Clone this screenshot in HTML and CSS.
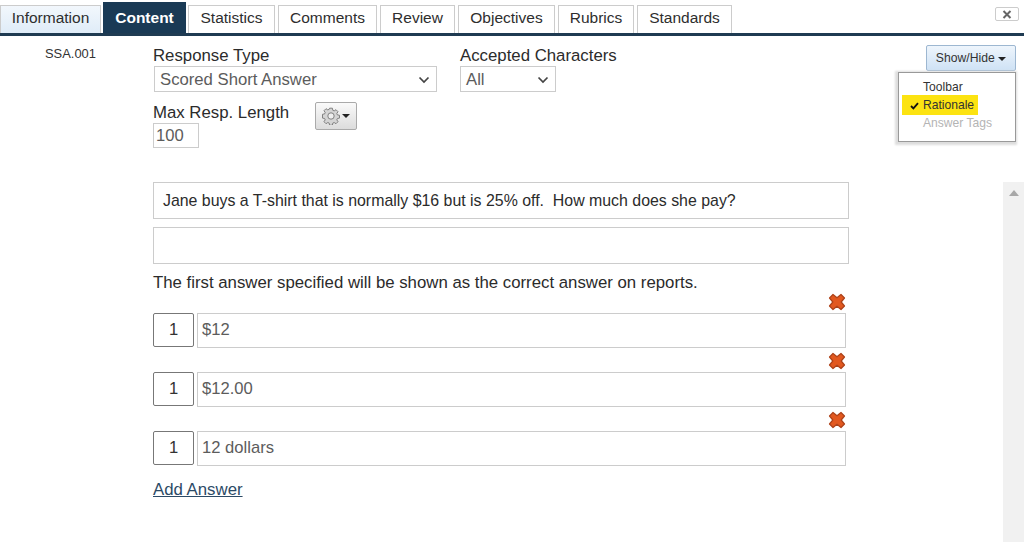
FILE: index.html
```html
<!DOCTYPE html>
<html lang="en">
<head>
<meta charset="utf-8">
<title>Content</title>
<link rel="stylesheet" href="styles.css">
</head>
<body>
<header class="tabs">
  <a class="tab tab-info">Information</a>
  <a class="tab tab-active">Content</a>
  <a class="tab tab-stat">Statistics</a>
  <a class="tab tab-comm">Comments</a>
  <a class="tab tab-rev">Review</a>
  <a class="tab tab-obj">Objectives</a>
  <a class="tab tab-rub">Rubrics</a>
  <a class="tab tab-std">Standards</a>
  <button class="close" aria-label="Close">
    <svg width="10" height="9" viewBox="0 0 10 9"><path d="M1.5 1 L8.500 8 M8.500 1 L1.500 8" stroke="#666" stroke-width="2" fill="none"/></svg>
  </button>
</header>

<section class="top">
  <div class="item-id">SSA.001</div>
  <div class="fields">
    <div class="field-row">
      <div class="field field-type">
        <label class="label">Response Type</label>
        <div class="select select-type">Scored Short Answer<svg class="chev" width="12" height="8" viewBox="0 0 12 8"><path d="M1.500 1.500 L6 6 L10.500 1.500" stroke="#444" stroke-width="1.700" fill="none"/></svg></div>
      </div>
      <div class="field">
        <label class="label">Accepted Characters</label>
        <div class="select select-chars">All<svg class="chev" width="12" height="8" viewBox="0 0 12 8"><path d="M1.500 1.500 L6 6 L10.500 1.500" stroke="#444" stroke-width="1.700" fill="none"/></svg></div>
      </div>
    </div>
    <div class="field-row field-row-2">
      <div class="field field-len">
        <label class="label">Max Resp. Length</label>
        <div class="input-len">100</div>
      </div>
      <button class="gear-btn" aria-label="Settings">
        <svg width="18" height="18" viewBox="0 0 18 18"><path d="M7.600 1.200h2.800l.4 2.100 1.400.6 1.800-1.200 2 2-1.200 1.800.6 1.400 2.100.4v2.800l-2.100.4-.6 1.400 1.200 1.800-2 2-1.800-1.200-1.400.6-.4 2.100H7.600l-.4-2.100-1.400-.6-1.800 1.200-2-2 1.200-1.800-.6-1.400-2.100-.4V7.300l2.100-.4.6-1.400-1.200-1.800 2-2 1.800 1.200 1.400-.6z" fill="#d4d4d4" stroke="#808080" stroke-width="1"/><circle cx="9" cy="9" r="3.200" fill="#eee" stroke="#808080" stroke-width="1"/></svg>
        <span class="caret"></span>
      </button>
    </div>
  </div>
  <div class="showhide">
    <button class="showhide-btn">Show/Hide <span class="caret caret-sm"></span></button>
    <div class="menu">
      <div class="menu-item">Toolbar</div>
      <div class="menu-item menu-on"><svg class="check" width="9" height="8" viewBox="0 0 9 8"><path d="M1 4 L3.400 6.400 L8 1.200" stroke="#111" stroke-width="1.800" fill="none"/></svg>Rationale</div>
      <div class="menu-item menu-off">Answer Tags</div>
    </div>
  </div>
</section>

<section class="lower">
  <div class="question">
    <div class="box">Jane buys a T-shirt that is normally $16 but is 25% off.&nbsp; How much does she pay?</div>
    <div class="box box-empty"></div>
    <p class="note">The first answer specified will be shown as the correct answer on reports.</p>
    <div class="answer">
      <svg class="del" width="18" height="18" viewBox="0 0 18 18"><path d="M5 1.500 9 4.800 13 1.500 16.500 5 13.200 9 16.500 13 13 16.500 9 13.200 5 16.500 1.500 13 4.800 9 1.500 5z" fill="#e2581f" stroke="#ad4219" stroke-width="1.200" stroke-linejoin="round"/></svg>
      <div class="answer-row"><div class="points">1</div><div class="answer-text">$12</div></div>
    </div>
    <div class="answer">
      <svg class="del" width="18" height="18" viewBox="0 0 18 18"><path d="M5 1.500 9 4.800 13 1.500 16.500 5 13.200 9 16.500 13 13 16.500 9 13.200 5 16.500 1.500 13 4.800 9 1.500 5z" fill="#e2581f" stroke="#ad4219" stroke-width="1.200" stroke-linejoin="round"/></svg>
      <div class="answer-row"><div class="points">1</div><div class="answer-text">$12.00</div></div>
    </div>
    <div class="answer">
      <svg class="del" width="18" height="18" viewBox="0 0 18 18"><path d="M5 1.500 9 4.800 13 1.500 16.500 5 13.200 9 16.500 13 13 16.500 9 13.200 5 16.500 1.500 13 4.800 9 1.500 5z" fill="#e2581f" stroke="#ad4219" stroke-width="1.200" stroke-linejoin="round"/></svg>
      <div class="answer-row"><div class="points">1</div><div class="answer-text">12 dollars</div></div>
    </div>
    <a class="add">Add Answer</a>
  </div>
  <div class="track"><span class="track-up"></span></div>
</section>
</body>
</html>
```

FILE: styles.css
```css
* { box-sizing: border-box; }
html, body { margin: 0; height: 542px; overflow: hidden; background: #fff; }
body { font-family: "Liberation Sans", Arial, sans-serif; color: #2b2b2b; font-size: 16px; display: flex; flex-direction: column; }

.tabs { display: flex; align-items: flex-end; height: 36px; border-bottom: 3px solid #1f3b52; flex: none; position: relative; }
.tab { height: 28px; padding-bottom: 3px; border: 1px solid #ccc; border-bottom: 0; background: #fff; display: flex; align-items: center; justify-content: center; font-size: 15.5px; color: #2e2e2e; margin-right: 3px; white-space: nowrap; }
.tab-info { width: 101px; margin-right: 2px; background: linear-gradient(#f2f7fc, #dfecf8); }
.tab-active { width: 83px; height: 31px; padding-bottom: 1px; margin-right: 2px; background: #1a3a55; border-color: #1a3a55; color: #fff; font-weight: bold; }
.tab-stat { width: 87px; }
.tab-comm { width: 99px; }
.tab-rev { width: 75px; }
.tab-obj { width: 97px; }
.tab-rub { width: 76px; }
.tab-std { width: 95px; }
.close { margin-left: auto; margin-right: 5px; margin-bottom: 12px; width: 24px; height: 14px; padding: 0; background: #fff; border: 1px solid #ccc; border-radius: 2px; display: flex; align-items: center; justify-content: center; }

.top { display: flex; height: 146px; flex: none; }
.item-id { width: 153px; padding: 10px 0 0 45px; font-size: 12.9px; color: #333; flex: none; }
.fields { padding-top: 10px; }
.field-row { display: flex; gap: 23px; }
.field-row-2 { margin-top: 12px; gap: 24px; }
.label { display: block; font-size: 16.8px; line-height: 19px; color: #2b2b2b; white-space: nowrap; }
.select { height: 26px; margin-top: 1px; border: 1px solid #ccc; background: #fff; color: #5c5c5c; font-size: 16.7px; padding: 1px 6px 0 5px; display: flex; align-items: center; justify-content: space-between; }
.select-type { width: 283px; margin-left: 1px; }
.select-chars { width: 96px; }
.chev { flex: none; }
.field-type { width: 284px; }
.field-len { width: 138px; }
.field-len .label { line-height: 18px; }
.input-len { width: 46px; height: 25px; margin-top: 1px; border: 1px solid #ccc; color: #5c5c5c; padding: 0 2px; line-height: 23px; font-size: 16.6px; }
.gear-btn { width: 42px; height: 28px; margin-top: -2px; padding: 0; border: 1px solid #aaa; border-radius: 2px; background: linear-gradient(#fafafa, #dcdcdc); display: flex; align-items: center; justify-content: center; gap: 2px; }
.caret { width: 0; height: 0; border-left: 4px solid transparent; border-right: 4px solid transparent; border-top: 4px solid #222; display: inline-block; }
.caret-sm { vertical-align: middle; }

.showhide { margin-left: auto; margin-right: 8px; margin-top: 9px; position: relative; width: 90px; height: 26px; }
.showhide-btn { width: 90px; height: 26px; padding: 0; border: 1px solid #9db7d1; border-radius: 2px; background: linear-gradient(#eef5fc, #cfe2f5); font: 12.2px "Liberation Sans", Arial, sans-serif; color: #333; }
.menu { position: absolute; right: 0; top: 27px; width: 118px; height: 70px; background: #fff; border: 1px solid #999; box-shadow: -1px 1px 2px 2px #ddd; padding: 5px 0 0 3px; }
.menu-item { font-size: 12.1px; height: 18px; line-height: 18px; padding-left: 21px; color: #333; white-space: nowrap; position: relative; width: fit-content; padding-right: 6px; }
.menu-on { background: #fce311; height: 20px; line-height: 19px; padding-top: 1px; margin-top: -1px; margin-bottom: -1px; padding-right: 4px; }
.menu-off { color: #b4b4b4; }
.check { position: absolute; left: 8px; top: 7px; }

.lower { flex: 1; display: flex; padding-left: 153px; min-height: 0; }
.question { width: 696px; flex: none; }
.box { height: 37px; border: 1px solid #ccc; padding: 0 9px; line-height: 35px; font-size: 15.9px; color: #2b2b2b; white-space: nowrap; }
.box-empty { margin-top: 8px; }
.note { margin: 10px 0 1px; font-size: 16.8px; line-height: 18px; color: #2b2b2b; white-space: nowrap; }
.answer { height: 59px; }
.del { display: block; margin-left: 675px; margin-bottom: 2px; }
.answer-row { display: flex; gap: 3px; }
.points { width: 41px; height: 34px; border: 1px solid #777; border-radius: 2px; text-align: center; line-height: 31px; font-size: 16.6px; color: #333; }
.answer-text { width: 649px; height: 35px; border: 1px solid #ccc; padding: 0 4px; line-height: 32px; font-size: 16.6px; color: #5c5c5c; }
.add { display: block; margin-top: 10px; font-size: 16.8px; line-height: 20px; color: #2c4a66; text-decoration: underline; }
.track { margin-left: auto; width: 21px; background: #f1f1f1; display: flex; justify-content: center; padding-top: 8px; }
.track-up { width: 0; height: 0; border-left: 5px solid transparent; border-right: 5px solid transparent; border-bottom: 6px solid #a8a8a8; }
```
